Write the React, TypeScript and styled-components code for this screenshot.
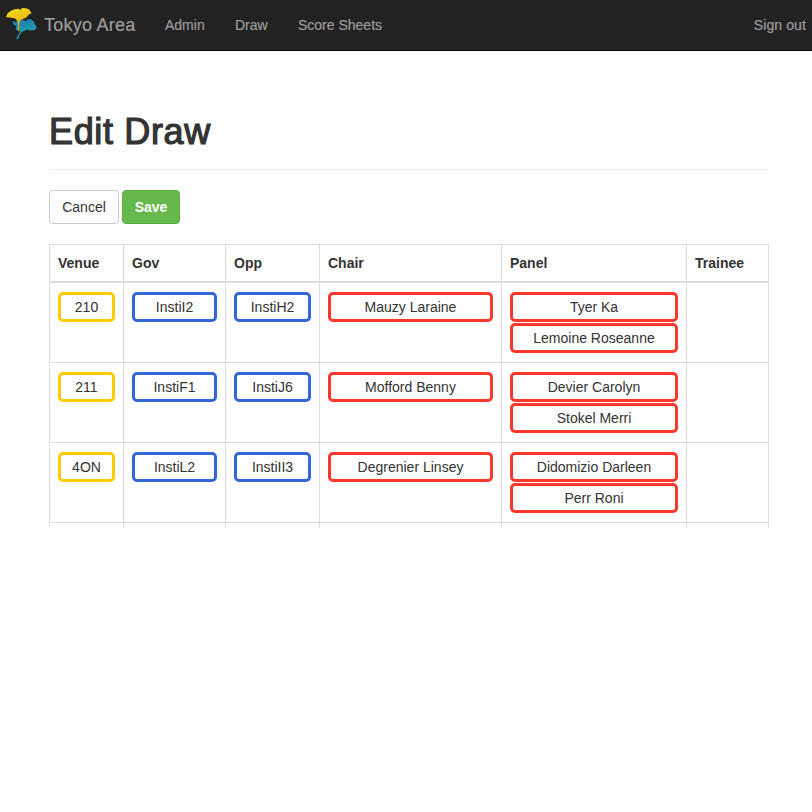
import React from "react";
import styled, { createGlobalStyle } from "styled-components";

const Global = createGlobalStyle`
  * { box-sizing: border-box; }
  body {
    margin: 0;
    background: #fff;
    color: #333;
    font: 14px/20px "Liberation Sans", Arial, sans-serif;
  }
`;

const Navbar = styled.nav`
  display: flex;
  align-items: center;
  height: 51px;
  padding: 0 6px 1px;
  background: #222;
  border-bottom: 1px solid #080808;
  color: #9d9d9d;
  -webkit-text-stroke: 0.2px #9d9d9d;
`;

const Logo = styled.svg`
  display: block;
  width: 32px;
  height: 34px;
  margin-top: -4px;
`;

const Brand = styled.span`
  margin-left: 6px;
  width: 106px;
  font-size: 18px;
  letter-spacing: 0.25px;
  white-space: nowrap;
`;

const NavLink = styled.a<{ $width?: number }>`
  display: block;
  margin-left: 15px;
  width: ${(p) => (p.$width ? `${p.$width}px` : "auto")};
  white-space: nowrap;
`;

const SignOut = styled(NavLink)`
  margin-left: auto;
  letter-spacing: 0.1px;
`;

const Container = styled.main`
  width: 720px;
  margin: 59px 0 0 49px;
`;

const Title = styled.h1`
  margin: 0 0 20px;
  height: 60px;
  border-bottom: 1px solid #eee;
  font-size: 36px;
  font-weight: 400;
  line-height: 44px;
  letter-spacing: 0.65px;
  -webkit-text-stroke: 1.2px #333;
`;

const Toolbar = styled.div`
  display: flex;
  gap: 3px;
  margin-bottom: 20px;
`;

const Button = styled.button<{ $primary?: boolean; $width: number }>`
  width: ${(p) => p.$width}px;
  height: 34px;
  padding: 0;
  border: 1px solid ${(p) => (p.$primary ? "#58ad3f" : "#ccc")};
  border-radius: 4px;
  background: ${(p) => (p.$primary ? "#67b84d" : "#fff")};
  color: ${(p) => (p.$primary ? "#fff" : "#333")};
  font: ${(p) => (p.$primary ? 700 : 400)} 14px/20px "Liberation Sans", Arial, sans-serif;
`;

const Table = styled.div`
  height: 284px;
  overflow: hidden;
  border-top: 1px solid #ddd;
  border-right: 1px solid #ddd;
`;

const Row = styled.div<{ $head?: boolean }>`
  display: grid;
  grid-template-columns: 74px 102px 94px 182px 185px 82px;
  height: ${(p) => (p.$head ? 38 : 80)}px;
  border-bottom: ${(p) => (p.$head ? 2 : 1)}px solid #ddd;
`;

const HeadCell = styled.div`
  padding: 8px;
  border-left: 1px solid #ddd;
  font-weight: 700;
`;

const Cell = styled.div`
  display: flex;
  flex-direction: column;
  gap: 1px;
  padding: 9px 8px;
  border-left: 1px solid #ddd;
`;

const Chip = styled.div<{ $color: string }>`
  flex: none;
  height: 30px;
  border: 3px solid ${(p) => p.$color};
  border-radius: 5px;
  line-height: 24px;
  text-align: center;
  white-space: nowrap;
`;

const YELLOW = "#ffcc00";
const BLUE = "#3366d6";
const RED = "#ff372d";

const columns = ["Venue", "Gov", "Opp", "Chair", "Panel", "Trainee"];
const colors = [YELLOW, BLUE, BLUE, RED, RED, RED];
const rows: string[][][] = [
  [["210"], ["InstiI2"], ["InstiH2"], ["Mauzy Laraine"], ["Tyer Ka", "Lemoine Roseanne"], []],
  [["211"], ["InstiF1"], ["InstiJ6"], ["Mofford Benny"], ["Devier Carolyn", "Stokel Merri"], []],
  [["4ON"], ["InstiL2"], ["InstiII3"], ["Degrenier Linsey"], ["Didomizio Darleen", "Perr Roni"], []],
  [[], [], [], [], [], []],
];

const GinkgoLogo = () => (
  <Logo viewBox="0 0 32 34">
    <defs>
      <linearGradient id="gold" x1="0" y1="0" x2="0.4" y2="1">
        <stop offset="0" stopColor="#f1e21c" />
        <stop offset="1" stopColor="#e3a50d" />
      </linearGradient>
      <linearGradient id="teal" x1="0" y1="0" x2="0.4" y2="1">
        <stop offset="0" stopColor="#1f78a8" />
        <stop offset="1" stopColor="#22a5b8" />
      </linearGradient>
    </defs>
    <path
      fill="url(#teal)"
      d="M6.2 15.6 L9 15.8 12 14.5 18 14 20 15.5 21.5 13.3 25 13.2 27.8 15.5 29 18.5 30.8 22 29 23.7 25.5 24.5 21.5 23.7 17.5 25 15 26.8 12.5 31 12.6 32.6 10.6 33.2 10.7 31.2 13.2 27.5 14 24.5 9.5 23.8 10.5 20 7.5 18.8Z"
    />
    <path
      fill="url(#gold)"
      d="M0 11.2 L1.6 7.3 5 4.7 8.5 3.3 12.5 2.8 14.2 4 16 2.1 20 2.2 23.5 3.8 25.6 7.3 22.8 8.6 20.5 11.5 17 13 13.8 15 13.3 18 13 25.3 11.8 25 12.1 18 11.3 15 9.5 12.8 6.5 11.9 3.5 11.6Z"
    />
  </Logo>
);

export default function App() {
  return (
    <>
      <Global />
      <Navbar>
        <GinkgoLogo />
        <Brand>Tokyo Area</Brand>
        <NavLink $width={55}>Admin</NavLink>
        <NavLink $width={48}>Draw</NavLink>
        <NavLink>Score Sheets</NavLink>
        <SignOut>Sign out</SignOut>
      </Navbar>
      <Container>
        <Title>Edit Draw</Title>
        <Toolbar>
          <Button $width={70}>Cancel</Button>
          <Button $primary $width={58}>Save</Button>
        </Toolbar>
        <Table>
          <Row $head>
            {columns.map((name) => (
              <HeadCell key={name}>{name}</HeadCell>
            ))}
          </Row>
          {rows.map((row, r) => (
            <Row key={r}>
              {row.map((names, c) => (
                <Cell key={c}>
                  {names.map((name) => (
                    <Chip key={name} $color={colors[c]}>{name}</Chip>
                  ))}
                </Cell>
              ))}
            </Row>
          ))}
        </Table>
      </Container>
    </>
  );
}
